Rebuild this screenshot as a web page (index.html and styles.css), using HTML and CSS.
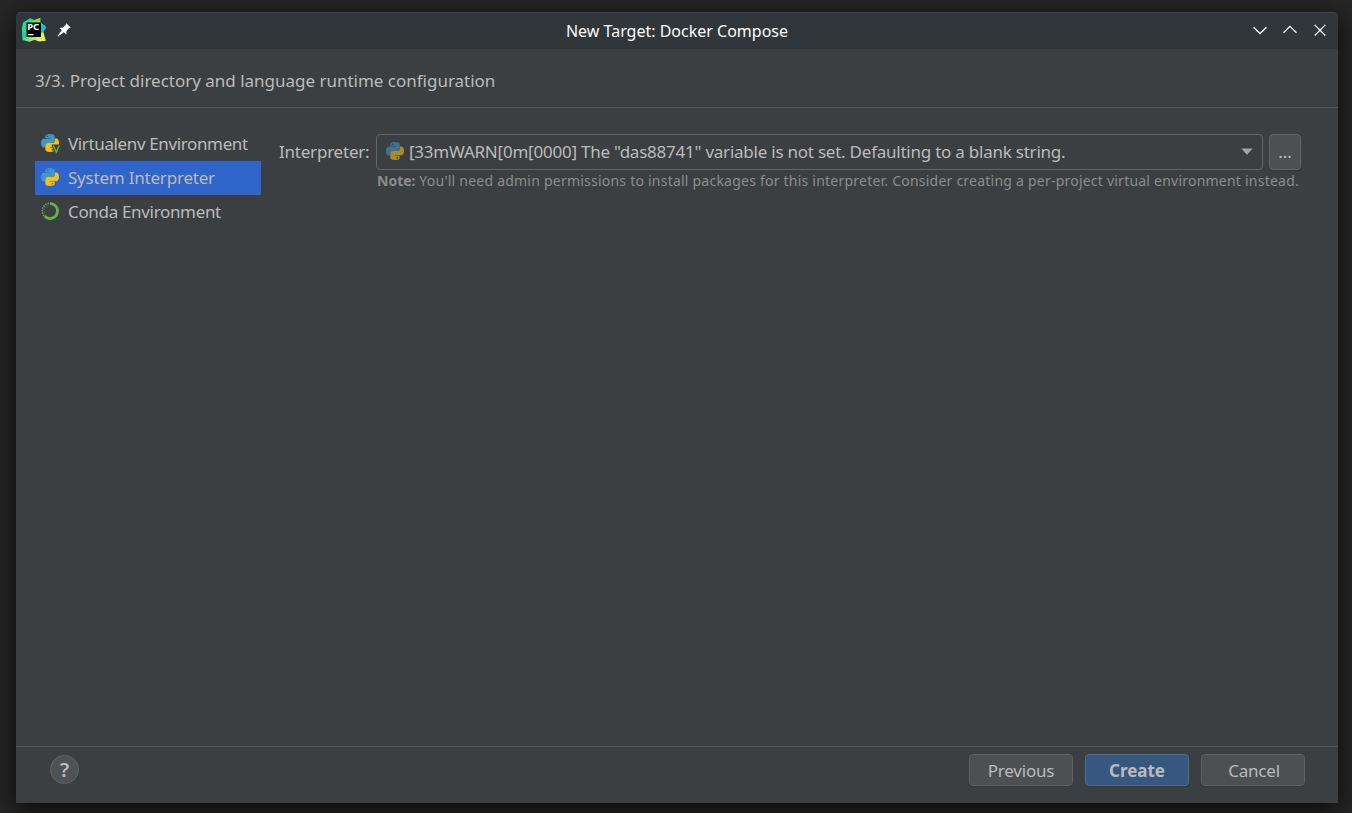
FILE: index.html
```html
<!DOCTYPE html>
<html lang="en">
<head>
<meta charset="utf-8">
<title>New Target: Docker Compose</title>
<link rel="stylesheet" href="styles.css">
</head>
<body>
<svg class="defs" width="0" height="0" aria-hidden="true">
  <defs>
    <path id="snake" fill-rule="evenodd" d="M9 0C5.600 0 4.300 1 4.300 2.500V4.300H9.300V4.700H2.700C1 4.700 0 6.400 0 9s1 4.500 2.700 4.500H4.200V11.300c0-1.500 1.100-2.400 2.500-2.400H11.200c1.500 0 2.500-1.100 2.500-2.500V2.500C13.700 1 12.400 0 9 0zM6.600 1.500a.8.8 0 1 1 0 1.600a.8.8 0 0 1 0-1.600z"/>
    <symbol id="python" viewBox="0 0 18 18">
      <use href="#snake" fill="#3f96cb"/>
      <use href="#snake" fill="#f4c015" transform="rotate(180 9 9)"/>
    </symbol>
  </defs>
</svg>
<div class="window">
  <header class="titlebar">
    <div class="title-left">
      <svg class="app-icon" width="26" height="26" viewBox="0 0 26 26">
        <defs>
          <linearGradient id="logo" x1="0" y1="0" x2="1" y2="1">
            <stop offset="0" stop-color="#20d68c"/><stop offset=".45" stop-color="#38dc83"/><stop offset=".8" stop-color="#e9f34c"/>
          </linearGradient>
        </defs>
        <path fill="url(#logo)" d="M2 5.500 9 1.200l5 2 5.500-2.500v5l3 2-.5 6 2.800 10-7 .8-4.300-1.700-5 2L1.500 23 .800 12z"/>
        <path fill="#12bfe0" d="m20 7.500 4 .8 1.200 2.700-3.200 4-2 1z"/>
        <path fill="#28c9a8" d="M1 15h4v6l-3.300.5z"/>
        <path fill="#7de04a" d="m9 5 4-2 6-2v5z"/>
        <path d="M5.500 5.500h14.500v14.500H5.500z"/>
        <path fill="#fff" d="M7 17h5.500v1.300H7z"/>
        <text class="logo-text" x="6.200" y="13.200">PC</text>
      </svg>
      <svg class="pin" width="14" height="14" viewBox="0 0 14 14">
        <path fill="#fcfcfc" d="m9.200.2 4.600 4.300-1.700.6-2.600 2.900-.2 3.500L6.800 9.200 1.200 13.500.400 12.900 4.800 7.300 2.400 5l3.500-.4 2.800-2.700z"/>
      </svg>
    </div>
    <h1 class="title">New Target: Docker Compose</h1>
    <div class="controls">
      <svg width="16" height="16" viewBox="0 0 16 16"><path d="M1.500 4.200 8 10.500l6.500-6.300"/></svg>
      <svg width="16" height="16" viewBox="0 0 16 16"><path d="M1.500 9.700 8 3.400l6.500 6.300"/></svg>
      <svg width="16" height="16" viewBox="0 0 16 16"><path d="m2.700 1.900 10.600 10.600m0-10.600L2.700 12.500"/></svg>
    </div>
  </header>
  <div class="step"><span class="step-text">3/3. Project directory and language runtime configuration</span></div>
  <main class="content">
    <nav class="kinds">
      <div class="kind">
        <svg width="20" height="20" viewBox="0 0 20 20">
          <use href="#python" width="18" height="18"/>
          <path class="venv-gap" d="M10.500 10.500H20V20h-6.500z"/>
          <path class="venv-mark" d="m12.300 11.500 3 6.500 3-6.500"/>
        </svg>
        <span class="k1">Virtualenv Environment</span>
      </div>
      <div class="kind selected">
        <svg width="20" height="20" viewBox="0 0 20 20"><use href="#python" width="18" height="18"/></svg>
        <span class="k2">System Interpreter</span>
      </div>
      <div class="kind">
        <svg width="20" height="20" viewBox="0 0 20 20">
          <path class="ring" d="M9 1.500A7.500 7.500 0 1 1 3.700 14.300"/>
          <path class="ring-dots" d="M3 14A8 8 0 0 1 9 1"/>
          <path class="ring-dots inner" d="M4.200 12.500A6 6 0 0 1 8 3"/>
        </svg>
        <span class="k3">Conda Environment</span>
      </div>
    </nav>
    <section class="form">
      <label class="label">Interpreter:</label>
      <div class="field">
        <div class="row">
          <div class="combo">
            <svg class="dim" width="18" height="18"><use href="#python" width="18" height="18"/></svg>
            <span class="combo-text">[33mWARN[0m[0000] The "das88741" variable is not set. Defaulting to a blank string.</span>
            <svg class="arrow" width="12" height="7" viewBox="0 0 12 7"><path fill="#a3a5a6" d="M.3.600h11.400L6 6.800z"/></svg>
          </div>
          <button class="browse">...</button>
        </div>
        <p class="note"><b>Note:</b> You'll need admin permissions to install packages for this interpreter. Consider creating a per-project virtual environment instead.</p>
      </div>
    </section>
  </main>
  <footer class="footer">
    <button class="help">?</button>
    <div class="actions">
      <button class="btn">Previous</button>
      <button class="btn primary">Create</button>
      <button class="btn cancel">Cancel</button>
    </div>
  </footer>
</div>
</body>
</html>
```

FILE: styles.css
```css
* { box-sizing: border-box; }
body {
  margin: 0;
  height: 813px;
  padding: 12px 14px 10px 16px;
  overflow: hidden;
  background: #262626;
  font: 17px/24px "Noto Sans", sans-serif;
  color: #bbbbbb;
}
button { font: inherit; color: inherit; padding: 0; margin: 0; }
.defs { display: block; }
.window {
  display: flex;
  flex-direction: column;
  height: 791px;
  border-radius: 5px 5px 0 0;
  background: #3c3f41;
  box-shadow: 0 6px 24px 2px rgba(0, 0, 0, .7);
}
.titlebar {
  display: grid;
  grid-template-columns: 1fr auto 1fr;
  align-items: center;
  height: 37px;
  padding: 0 10px 0 5px;
  border-top: 1px solid #42474b;
  border-radius: 5px 5px 0 0;
  background: #31363b;
}
.title-left { display: flex; align-items: center; gap: 10px; }
.app-icon { margin-bottom: 2px; }
.logo-text { font: 700 9.5px "Noto Sans", sans-serif; fill: #fff; }
.pin { margin-bottom: 3px; }
.title { margin: 0; padding-left: 5px; font-size: 16px; font-weight: 400; color: #fcfcfc; }
.controls { display: flex; justify-content: flex-end; gap: 14px; }
.controls path { fill: none; stroke: #fcfcfc; stroke-width: 1.3; }
.step {
  display: flex;
  align-items: center;
  height: 59px;
  padding: 6px 19px 0;
  border-bottom: 1px solid #515456;
}
.step-text { letter-spacing: -.01px; }
.content { display: flex; flex: 1; padding: 19px 19px 0; }
.kinds { width: 226px; }
.kind { display: flex; align-items: center; gap: 7px; height: 34px; padding-left: 6px; }
.kind svg { flex: none; }
.k1 { letter-spacing: -.37px; }
.k2 { letter-spacing: -.21px; }
.k3 { letter-spacing: -.33px; }
.selected { background: #2f65ca; }
.venv-gap { fill: #3c3f41; }
.venv-mark { fill: none; stroke: #62b543; stroke-width: 1.4; }
.ring { fill: none; stroke: #62b543; stroke-width: 2.7; }
.ring-dots { fill: none; stroke: #62b543; stroke-width: 1.4; stroke-dasharray: 1.5 1; }
.inner { stroke-width: 1; stroke-dasharray: 1 1.4; }
.form { display: flex; flex: 1; padding: 7px 0 0 18px; }
.label { width: 98px; padding-top: 6px; letter-spacing: -.22px; }
.field { width: 925px; }
.row { display: flex; gap: 6px; }
.combo {
  display: flex;
  align-items: center;
  width: 887px;
  height: 36px;
  margin-left: -1px;
  padding: 0 9px 1px;
  border: 1px solid #646667;
  border-radius: 4px;
}
.dim { opacity: .6; margin: 0 5px 2px 0; }
.combo-text { letter-spacing: -.234px; }
.arrow { margin-left: auto; }
.browse {
  width: 32px;
  height: 36px;
  border: 1px solid #646667;
  border-radius: 4px;
  background: #4c5052;
  box-shadow: 0 1px 1px #343739;
}
.note { margin: 1px 0 0; font-size: 14px; line-height: 20px; letter-spacing: .226px; color: #8c8c8c; white-space: nowrap; }
.note b { letter-spacing: 0; }
.footer {
  display: flex;
  justify-content: space-between;
  height: 57px;
  padding: 7px 33px 0 34px;
  border-top: 1px solid #515456;
}
.help {
  width: 29px;
  height: 29px;
  margin-top: 1px;
  border: 1px solid #636566;
  border-radius: 50%;
  background: #4e5254;
  font-size: 20px;
  font-weight: 600;
  line-height: 26px;
}
.actions { display: flex; gap: 12px; }
.btn {
  width: 104px;
  height: 32px;
  padding-top: 2px;
  border: 1px solid #5e6060;
  border-radius: 4px;
  background: #4c5052;
  box-shadow: 0 1px 1px #36393b;
  letter-spacing: -.2px;
}
.cancel { padding-left: 2px; }
.primary { border-color: #4c708c; background: #365880; font-weight: 700; letter-spacing: 0; }
```
